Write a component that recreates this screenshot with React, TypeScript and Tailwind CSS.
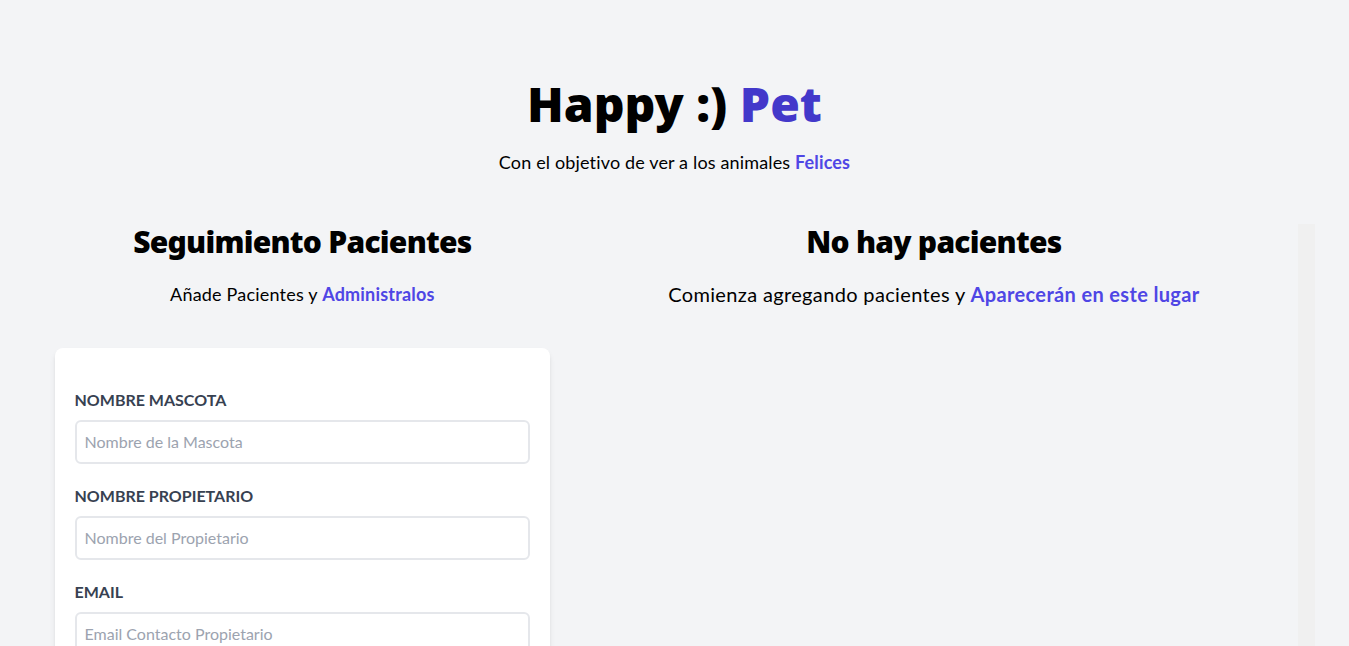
const fields = [
  { id: "mascota", label: "Nombre Mascota", placeholder: "Nombre de la Mascota", type: "text" },
  { id: "propietario", label: "Nombre Propietario", placeholder: "Nombre del Propietario", type: "text" },
  { id: "email", label: "Email", placeholder: "Email Contacto Propietario", type: "email" },
];

const heading = "font-['Noto_Sans',sans-serif] font-black";

const Header = () => (
  <>
    <h1 className={`${heading} text-5xl text-center md:w-2/3 mx-auto`}>
      Happy :) <span className="text-[#4338ca]">Pet</span>
    </h1>
    <p className="text-lg text-center mt-5 tracking-[0.15px]">
      Con el objetivo de ver a los animales{" "}
      <span className="text-[#4f46e5] font-bold">Felices</span>
    </p>
  </>
);

const Formulario = () => (
  <div className="md:w-1/2 lg:w-2/5 mx-5">
    <h2 className={`${heading} text-3xl text-center tracking-tight`}>Seguimiento Pacientes</h2>
    <p className="text-lg mt-5 text-center mb-10 tracking-[0.2px]">
      Añade Pacientes y{" "}
      <span className="text-[#4f46e5] font-bold">Administralos</span>
    </p>
    <form className="bg-white shadow-md rounded-lg py-10 px-5 mb-10">
      {fields.map((f) => (
        <div key={f.id} className="mb-5">
          <label htmlFor={f.id} className="block text-[#374151] uppercase font-bold">
            {f.label}
          </label>
          <input
            id={f.id}
            type={f.type}
            placeholder={f.placeholder}
            className="border-2 border-[#e5e7eb] w-full p-2 mt-2 placeholder-[#9ca3af] rounded-md outline-none"
          />
        </div>
      ))}
    </form>
  </div>
);

// the scroll track is drawn as a right border, headless hides real scrollbars
const ListadoPacientes = () => (
  <div className="md:w-1/2 lg:w-3/5 md:h-screen overflow-y-auto border-r-[17px] border-r-[#f0f0f0]">
    <h2 className={`${heading} text-3xl text-center tracking-tight`}>No hay pacientes</h2>
    <p className="text-xl mt-5 mb-10 text-center tracking-[0.35px]">
      Comienza agregando pacientes y{" "}
      <span className="text-[#4f46e5] font-bold">Aparecerán en este lugar</span>
    </p>
  </div>
);

export default function App() {
  return (
    <div className="bg-[#f3f4f6] min-h-screen text-black font-['Lato',sans-serif]">
      <div className="container mx-auto pt-20">
        <Header />
        <div className="mt-12 md:flex">
          <Formulario />
          <ListadoPacientes />
        </div>
      </div>
    </div>
  );
}
